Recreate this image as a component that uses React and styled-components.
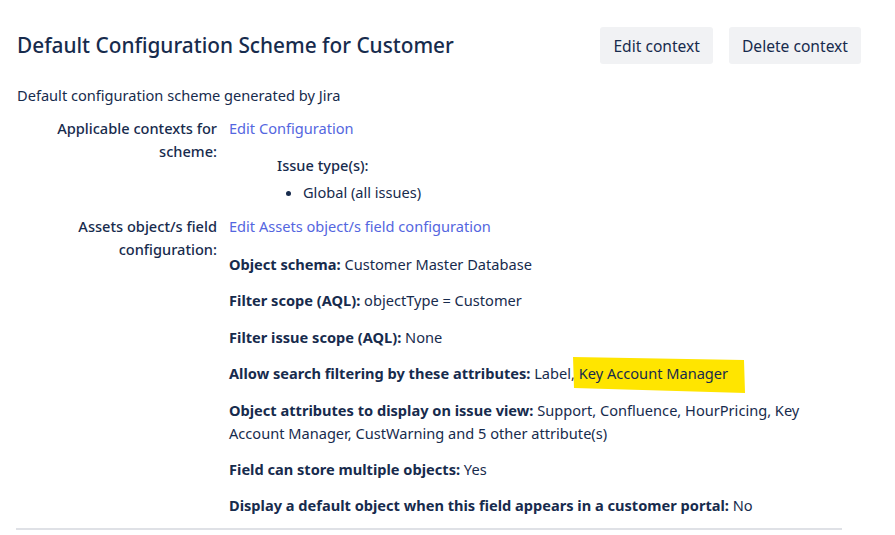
import React from 'react';
import styled, { createGlobalStyle } from 'styled-components';

const GlobalStyle = createGlobalStyle`
  html, body {
    margin: 0;
    padding: 0;
    background: #ffffff;
  }

  body {
    font-family: "Noto Sans", "Open Sans", sans-serif;
    color: #172b4d;
  }
`;

const Page = styled.div`
  width: 895px;
  padding: 27px 34px 0 17px;
  box-sizing: border-box;
`;

const Header = styled.header`
  display: flex;
  align-items: flex-start;
  justify-content: space-between;
`;

const Title = styled.h2`
  margin: 6px 0 0;
  font-size: 20.8px;
  font-weight: 500;
  line-height: 24px;
  color: #172b4d;
`;

const Actions = styled.div`
  display: flex;
  gap: 16px;
`;

const Button = styled.button`
  height: 37px;
  padding: 0 13px;
  border: none;
  border-radius: 3px;
  background: #f1f2f4;
  color: #172b4d;
  font-family: inherit;
  font-size: 15.6px;
`;

const Description = styled.p`
  margin: 20px 0 0;
  font-size: 14.6px;
  line-height: 23px;
`;

const Details = styled.dl`
  display: grid;
  grid-template-columns: 200px 1fr;
  column-gap: 12px;
  row-gap: 11px;
  margin: 10px 0 0;
  font-size: 14.6px;
  line-height: 23px;
`;

const Label = styled.dt`
  text-align: right;
  font-weight: 500;
  padding-left: 30px;
`;

const Value = styled.dd`
  margin: 0;
`;

const Link = styled.a`
  color: #5466e0;
  text-decoration: none;
  cursor: pointer;
`;

const IssueTypes = styled.div`
  margin: 14px 0 0 48px;
`;

const IssueTitle = styled.div`
  font-weight: 500;
`;

const IssueList = styled.ul`
  margin: 4px 0 0;
  padding-left: 26px;
`;

const Params = styled.div`
  display: flex;
  flex-direction: column;
  gap: 13.4px;
  margin-top: 15px;
`;

const Param = styled.p`
  margin: 0;
  padding-right: 20px;
`;

const Key = styled.strong`
  font-weight: 700;
`;

const Marked = styled.span`
  position: relative;
  z-index: 0;
`;

const Highlighter = styled.svg`
  position: absolute;
  left: -6px;
  top: -7px;
  width: 172px;
  height: 38px;
  z-index: -1;
`;

const Divider = styled.hr`
  margin: 11px 19px 0 -1px;
  border: none;
  height: 2px;
  background: #dfe1e6;
`;

export default function App() {
  return (
    <>
      <GlobalStyle />
      <Page>
        <Header>
          <Title>Default Configuration Scheme for Customer</Title>
          <Actions>
            <Button>Edit context</Button>
            <Button>Delete context</Button>
          </Actions>
        </Header>
        <Description>Default configuration scheme generated by Jira</Description>
        <Details>
          <Label>Applicable contexts for scheme:</Label>
          <Value>
            <Link>Edit Configuration</Link>
            <IssueTypes>
              <IssueTitle>Issue type(s):</IssueTitle>
              <IssueList>
                <li>Global (all issues)</li>
              </IssueList>
            </IssueTypes>
          </Value>
          <Label>Assets object/s field configuration:</Label>
          <Value>
            <Link>Edit Assets object/s field configuration</Link>
            <Params>
              <Param><Key>Object schema:</Key> Customer Master Database</Param>
              <Param><Key>Filter scope (AQL):</Key> objectType = Customer</Param>
              <Param><Key>Filter issue scope (AQL):</Key> None</Param>
              <Param>
                <Key>Allow search filtering by these attributes:</Key> Label,{' '}
                <Marked>
                  <Highlighter viewBox="0 0 172 38" preserveAspectRatio="none">
                    <polygon points="0,1 171,4 172,37 1,32" fill="#ffe500" />
                  </Highlighter>
                  Key Account Manager
                </Marked>
              </Param>
              <Param>
                <Key>Object attributes to display on issue view:</Key> Support, Confluence, HourPricing, Key Account Manager, CustWarning and 5 other attribute(s)
              </Param>
              <Param><Key>Field can store multiple objects:</Key> Yes</Param>
              <Param><Key>Display a default object when this field appears in a customer portal:</Key> No</Param>
            </Params>
          </Value>
        </Details>
        <Divider />
      </Page>
    </>
  );
}
